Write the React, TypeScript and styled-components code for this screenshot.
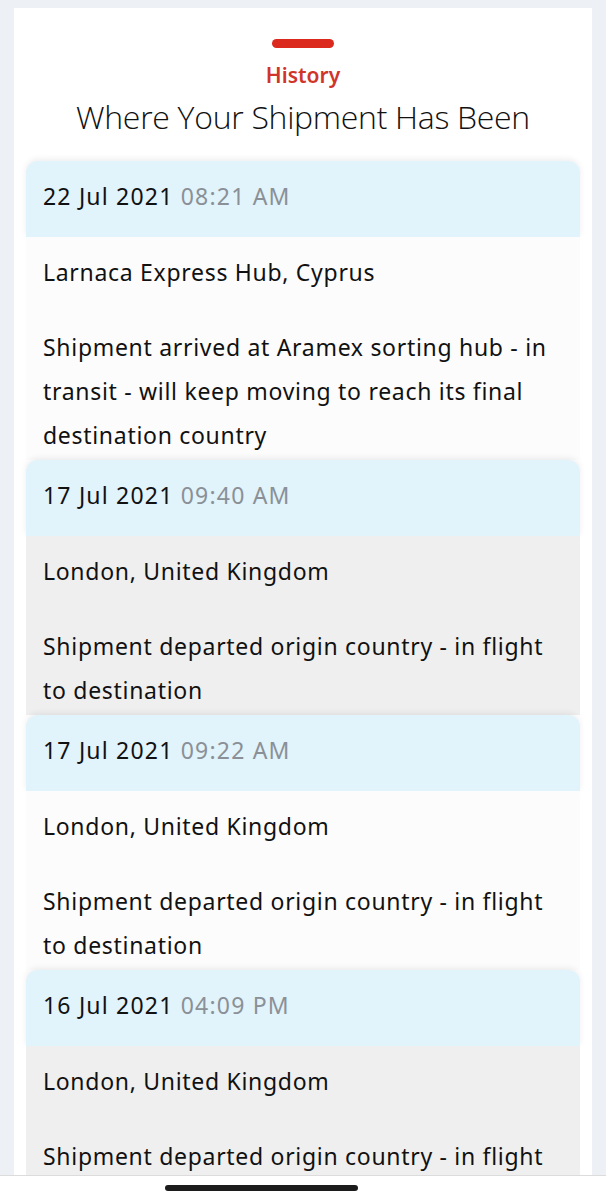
import styled, { createGlobalStyle } from "styled-components";

//* history data, newest first
type Event = {
  date: string;
  time: string;
  location: string;
  description: string;
};

const events: Event[] = [
  {
    date: "22 Jul 2021",
    time: "08:21 AM",
    location: "Larnaca Express Hub, Cyprus",
    description:
      "Shipment arrived at Aramex sorting hub - in transit - will keep moving to reach its final destination country",
  },
  {
    date: "17 Jul 2021",
    time: "09:40 AM",
    location: "London, United Kingdom",
    description: "Shipment departed origin country - in flight to destination",
  },
  {
    date: "17 Jul 2021",
    time: "09:22 AM",
    location: "London, United Kingdom",
    description: "Shipment departed origin country - in flight to destination",
  },
  {
    date: "16 Jul 2021",
    time: "04:09 PM",
    location: "London, United Kingdom",
    description: "Shipment departed origin country - in flight to destination",
  },
];

/*
 * App is the shipment history sheet
*/
const App = (): JSX.Element => {
  return (
    <>
      <GlobalStyle />
      <Sheet>
        <Handle />
        <Eyebrow>History</Eyebrow>
        <Title>Where Your Shipment Has Been</Title>
        <Timeline>
          {events.map((ev, i) => (
            <Entry key={i}>
              <EntryHeader>
                <DateText>{ev.date}</DateText> <TimeText>{ev.time}</TimeText>
              </EntryHeader>
              <EntryBody $shaded={i % 2 === 1}>
                <Location>{ev.location}</Location>
                <Description>{ev.description}</Description>
              </EntryBody>
            </Entry>
          ))}
        </Timeline>
      </Sheet>
      <HomeBar>
        <HomeIndicator />
      </HomeBar>
    </>
  );
};

export default App;

//lines below this point are styled-components logic

const GlobalStyle = createGlobalStyle`
  html, body {
    margin: 0;
    padding: 0;
    background: #edf1f5;
    font-family: "Noto Sans", "Open Sans", sans-serif;
    color: #111;
  }
  * { box-sizing: border-box; }
`;

/*
 * Sheet is the white panel that holds everything
*/
const Sheet = styled.div`
  margin: 8px 14px 0;
  background: #fff;
  padding: 31px 12px 40px;
  display: flex;
  flex-direction: column;
  align-items: center;
`;

const Handle = styled.div`
  width: 62px;
  height: 9px;
  border-radius: 5px;
  background: #dc291e;
`;

const Eyebrow = styled.div`
  margin-top: 13px;
  color: #d0342a;
  font-size: 21px;
  font-weight: 600;
  line-height: 28px;
`;

const Title = styled.h1`
  margin: 8px 0 0;
  font-family: "Open Sans", "Noto Sans", sans-serif;
  font-weight: 300;
  font-size: 32px;
  line-height: 40px;
  color: #111;
  letter-spacing: -0.3px;
`;

const Timeline = styled.div`
  align-self: stretch;
  margin-top: 24px;
  display: flex;
  flex-direction: column;
`;

const Entry = styled.div`
  display: flex;
  flex-direction: column;
`;

/*
 * EntryHeader is the blue rounded tab with the date and time
*/
const EntryHeader = styled.div`
  background: #e1f3fb;
  border-radius: 12px 12px 0 0;
  box-shadow: 0 -2px 6px rgba(0, 0, 0, 0.07);
  height: 76px;
  padding: 19px 17px 0;
  font-size: 23px;
  line-height: 32px;
  letter-spacing: 1.2px;
  white-space: nowrap;
`;

const DateText = styled.span`
  color: #111;
`;

const TimeText = styled.span`
  color: #8a9096;
`;

const EntryBody = styled.div<{ $shaded: boolean }>`
  background: ${(p) => (p.$shaded ? "#efefef" : "#fcfcfc")};
  padding: 13px 17px 3px;
  font-size: 23px;
  line-height: 44px;
  letter-spacing: 0.7px;
  color: #111;
`;

const Location = styled.div`
  margin-bottom: 31px;
`;

const Description = styled.div``;

/*
 * HomeBar is the system strip that sits over the bottom of the page
*/
const HomeBar = styled.div`
  position: fixed;
  left: 0;
  right: 0;
  bottom: 0;
  height: 25px;
  background: #fff;
  border-top: 1px solid #dcdcdc;
  display: flex;
  justify-content: flex-start;
  padding: 9px 0 0 165px;
`;

const HomeIndicator = styled.div`
  width: 193px;
  height: 6px;
  border-radius: 3px;
  background: #1c1c1c;
`;
